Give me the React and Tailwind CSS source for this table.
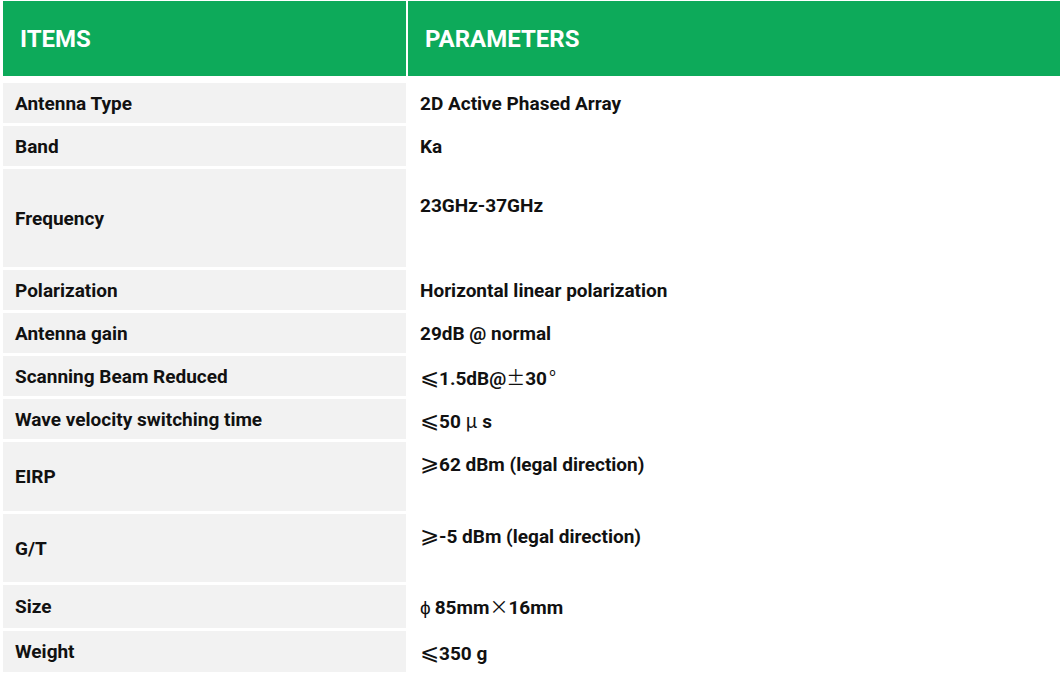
const cjk = 'font-["Noto_Sans_CJK_SC",sans-serif] font-normal'

function Sym({ children, big, className = '' }) {
  return (
    <span className={`${cjk} ${big ? 'text-[23px] leading-[20px]' : ''} ${className}`}>
      {children}
    </span>
  )
}

const rows = [
  { item: 'Antenna Type', value: '2D Active Phased Array', h: 'h-[40px]' },
  { item: 'Band', value: 'Ka', h: 'h-[40px]' },
  { item: 'Frequency', value: '23GHz-37GHz', h: 'h-[98px]', pt: 'pt-[25px]' },
  { item: 'Polarization', value: 'Horizontal linear polarization', h: 'h-[40px]' },
  { item: 'Antenna gain', value: '29dB @ normal', h: 'h-[40px]' },
  {
    item: 'Scanning Beam Reduced',
    value: (
      <>
        <Sym big>⩽</Sym>1.5dB@<Sym>±</Sym>30<Sym className="ml-[2px]">°</Sym>
      </>
    ),
    h: 'h-[40px]',
  },
  {
    item: 'Wave velocity switching time',
    value: (
      <>
        <Sym big>⩽</Sym>50 <Sym>μ</Sym> s
      </>
    ),
    h: 'h-[40px]',
  },
  {
    item: 'EIRP',
    value: (
      <>
        <Sym big>⩾</Sym>62 dBm (legal direction)
      </>
    ),
    h: 'h-[69px]',
  },
  {
    item: 'G/T',
    value: (
      <>
        <Sym big>⩾</Sym>-5 dBm (legal direction)
      </>
    ),
    h: 'h-[68px]',
  },
  {
    item: 'Size',
    value: (
      <>
        <Sym className="mr-[4px]">ϕ</Sym>85mm<Sym>×</Sym>16mm
      </>
    ),
    h: 'h-[43px]',
  },
  {
    item: 'Weight',
    value: (
      <>
        <Sym big>⩽</Sym>350 g
      </>
    ),
    h: 'h-[41px]',
  },
]

export default function App() {
  return (
    <div className="w-[1063px] h-[700px] bg-white pt-[1px] px-[3px] font-['Roboto',sans-serif] text-[#111]">
      {/* Header */}
      <div className="grid grid-cols-[403px_652px] gap-x-[2px]">
        <div className="h-[75px] bg-[#0daa5a] flex items-center pl-[17px] text-white text-[24px] font-bold">
          ITEMS
        </div>
        <div className="h-[75px] bg-[#0daa5a] flex items-center pl-[17px] text-white text-[24px] font-bold">
          PARAMETERS
        </div>
      </div>

      {/* Body */}
      <div className="mt-[7px] flex flex-col gap-y-[3px]">
        {rows.map((r) => (
          <div key={r.item} className={`grid grid-cols-[403px_652px] gap-x-[2px] ${r.h}`}>
            <div className="bg-[#f2f2f2] flex items-center pl-[12px] pt-[2px] text-[19px] font-bold">
              {r.item}
            </div>
            <div className={`pl-[12px] text-[19px] font-bold leading-[24px] ${r.pt || 'pt-[9px]'}`}>
              {r.value}
            </div>
          </div>
        ))}
      </div>
    </div>
  )
}
